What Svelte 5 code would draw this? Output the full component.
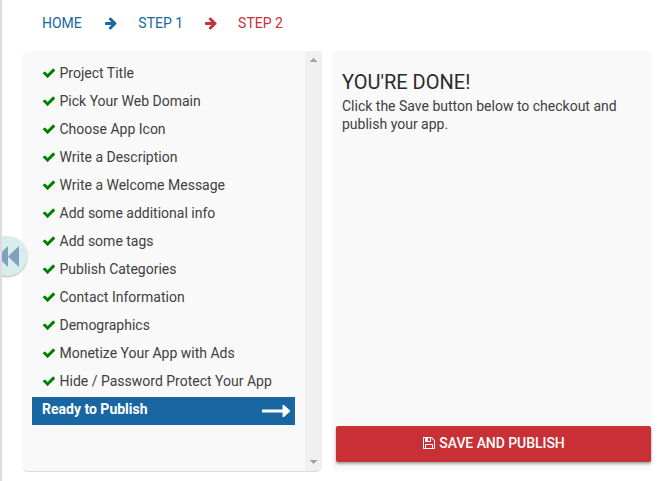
<script>

	const check = "M1671 566q0 40-28 68l-724 724-136 136q-28 28-68 28t-68-28l-136-136-362-362q-28-28-28-68t28-68l136-136q28-28 68-28t68 28l294 295 656-657q28-28 68-28t68 28l136 136q28 28 28 68z";
	const arrow = "M1600 960q0 54-37 91l-651 651q-39 37-91 37-51 0-90-37l-75-75q-38-38-38-91t38-91l293-293h-704q-52 0-84.5-37.5t-32.5-90.5v-128q0-53 32.5-90.5t84.5-37.5h704l-293-294q-38-36-38-90t38-90l75-75q38-38 90-38 53 0 91 38l651 651q37 35 37 90z";
	const floppy = "M512 1536h768v-384h-768v384zm896 0h128v-896q0-14-10-38.5t-20-34.5l-281-281q-10-10-34-20t-39-10v416q0 40-28 68t-68 28h-576q-40 0-68-28t-28-68v-416h-128v1280h128v-416q0-40 28-68t68-28h832q40 0 68 28t28 68v416zm-384-928v-320q0-13-9.5-22.5t-22.5-9.5h-192q-13 0-22.5 9.5t-9.5 22.5v320q0 13 9.5 22.5t22.5 9.5h192q13 0 22.5-9.5t9.5-22.5zm640 32v928q0 40-28 68t-68 28h-1344q-40 0-68-28t-28-68v-1344q0-40 28-68t68-28h928q40 0 88 20t76 48l280 280q28 28 48 76t20 88z";

	let steps = [
		'Project Title',
		'Pick Your Web Domain',
		'Choose App Icon',
		'Write a Description',
		'Write a Welcome Message',
		'Add some additional info',
		'Add some tags',
		'Publish Categories',
		'Contact Information',
		'Demographics',
		'Monetize Your App with Ads',
		'Hide / Password Protect Your App',
		'Ready to Publish'
	];
	let current = $state(12);

</script>

<main>
	<nav>
		<a href="#home">HOME</a>
		<svg class="arrow first" viewBox="0 0 1792 1792"><path d={arrow} /></svg>
		<a href="#step1">STEP 1</a>
		<svg class="arrow red" viewBox="0 0 1792 1792"><path d={arrow} /></svg>
		<a href="#step2" class="red">STEP 2</a>
	</nav>

	<div class="panels">
		<section class="list">
			<ul>
				{#each steps as step, i}
					<li class:active={i == current}>
						{#if i != current}
							<svg class="check" viewBox="0 0 1792 1792"><path d={check} /></svg>
						{/if}
						<span>{step}</span>
						{#if i == current}
							<svg class="long" viewBox="0 0 28 12"><path d="M0 4.500h20.500V0H22l6 5.500v1L22 12h-1.500V7.500H0z" /></svg>
						{/if}
					</li>
				{/each}
			</ul>
			<div class="scroll">
				<svg viewBox="0 0 7 4"><path d="M3 0h1v1h1v1h1v1h1v1H0V3h1V2h1V1h1z" /></svg>
				<svg viewBox="0 0 7 4"><path d="M0 0h7v1H6v1H5v1H4v1H3V3H2V2H1V1H0z" /></svg>
			</div>
		</section>

		<section class="done">
			<div class="message">
				<h1>YOU'RE DONE!</h1>
				<p>Click the Save button below to checkout and publish your app.</p>
			</div>
			<button>
				<svg viewBox="0 0 1792 1792"><path d={floppy} /></svg>
				<span>SAVE AND PUBLISH</span>
			</button>
		</section>
	</div>

	<div class="back">
		<svg viewBox="0 0 22 21"><path d="M11 0v21L0 10.500zM22 0v21L11 10.500z" /></svg>
	</div>
</main>

<style>
:global(body) {
	background: #fff;
}

main {
	position: relative;
	box-sizing: border-box;
	height: 481px;
	border-left: 2px solid #ddd;
	padding: 0 9px 0 20px;
	overflow: hidden;
	font-family: Roboto, sans-serif;
	font-size: 14px;
	color: #404040;
}

svg {
	display: block;
	fill: currentColor;
	flex: none;
}

nav {
	display: flex;
	align-items: center;
	height: 46px;
	margin-bottom: 5px;
	padding-left: 20px;
	color: #1866a2;
}

nav a {
	color: inherit;
	text-decoration: none;
}

nav .red {
	color: #c83036;
}

.arrow {
	width: 14px;
	height: 14px;
	margin: 0 20.5px;
}

.arrow.first {
	margin: 0 20px 0 22.5px;
}

.panels {
	display: flex;
	align-items: flex-start;
	gap: 10px;
}

section {
	box-sizing: border-box;
	background: #f9f9f9;
	border-radius: 6px;
}

.list {
	display: flex;
	width: 300px;
	height: 421px;
	border-bottom: 1px solid #ddd;
	border-top-right-radius: 0;
	overflow: hidden;
}

ul {
	flex: 1;
	list-style: none;
	margin: 0;
	padding: 10px;
}

li {
	display: flex;
	align-items: center;
	box-sizing: border-box;
	height: 28px;
	padding: 0 5px 4px 10px;
	white-space: nowrap;
}

li.active {
	background: #1866a2;
	color: #fff;
	font-weight: bold;
}

.check {
	width: 14px;
	height: 14px;
	margin-right: 3.5px;
	color: #008000;
}

.long {
	width: 28px;
	height: 12px;
	margin: 4px 0 0 auto;
}

.scroll {
	display: flex;
	flex-direction: column;
	justify-content: space-between;
	align-items: center;
	box-sizing: border-box;
	width: 17px;
	padding: 7px 0;
	background: #f0f0f0;
	color: #a3a3a3;
}

.scroll svg {
	width: 7px;
	height: 4px;
}

.done {
	display: flex;
	flex-direction: column;
	justify-content: space-between;
	width: 320px;
	height: 420px;
	padding: 19px 1px 9px 4px;
}

.message {
	padding: 0 6px;
}

h1 {
	margin: 0;
	font-size: 20px;
	line-height: 24px;
	font-weight: 400;
	color: #2b2b2b;
}

p {
	margin: 3px 0 0;
	line-height: 18px;
}

button {
	display: flex;
	align-items: center;
	justify-content: center;
	height: 36px;
	padding: 0 0 2px;
	border: 0;
	border-radius: 2px;
	background: #c83036;
	box-shadow: 0 2px 3px rgba(0, 0, 0, 0.35);
	color: #fff;
	font: 500 14px Roboto, sans-serif;
	letter-spacing: -0.06px;
}

button svg {
	width: 14px;
	height: 14px;
	margin-right: 3px;
}

/* round handle, half hidden behind the left edge */
.back {
	position: absolute;
	left: -15px;
	top: 236px;
	display: flex;
	align-items: center;
	justify-content: flex-end;
	box-sizing: border-box;
	width: 40px;
	height: 40px;
	padding-right: 8px;
	border-radius: 50%;
	background: #d8eeec;
	box-shadow: 0 1px 2px rgba(0, 0, 0, 0.3);
	color: #80a1bd;
}

.back svg {
	width: 22px;
	height: 21px;
}
</style>
